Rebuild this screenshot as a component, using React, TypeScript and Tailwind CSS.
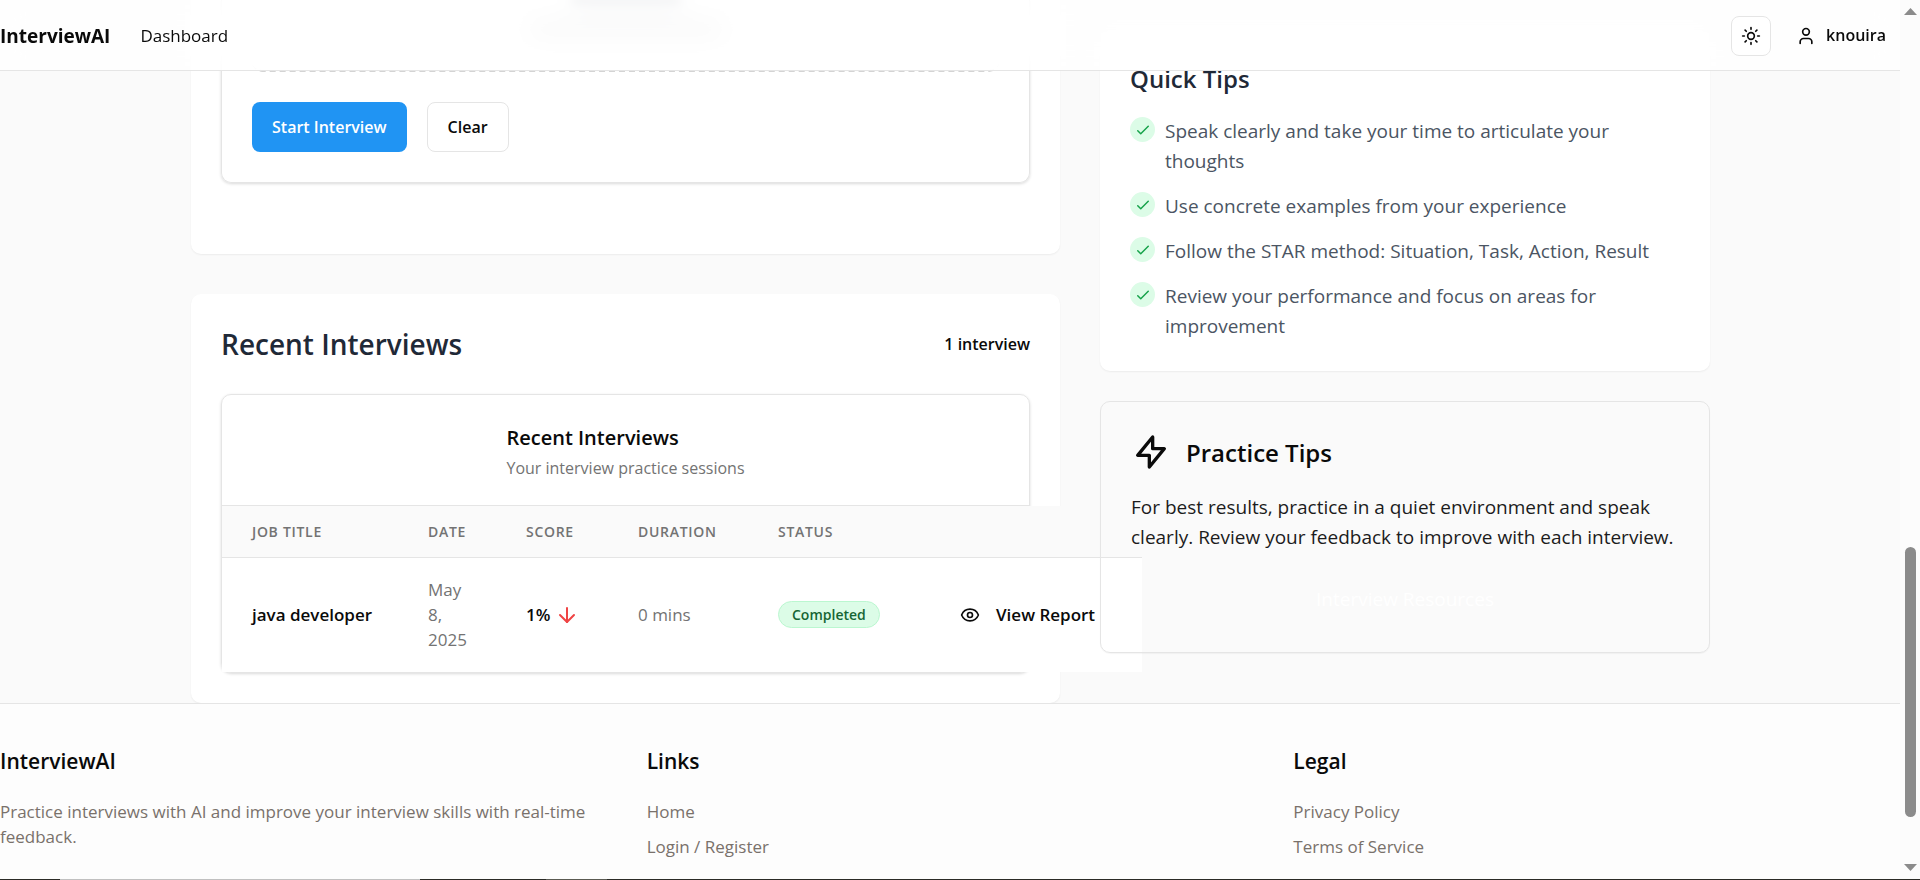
import React from "react";
import { ArrowDown, Eye, Sun, User } from "lucide-react";

const tips = [
  "Speak clearly and take your time to articulate your thoughts",
  "Use concrete examples from your experience",
  "Follow the STAR method: Situation, Task, Action, Result",
  "Review your performance and focus on areas for improvement",
];

const footerColumns = [
  { title: "Links", links: ["Home", "Login / Register"] },
  { title: "Legal", links: ["Privacy Policy", "Terms of Service"] },
];

function Header() {
  return (
    <header className="absolute inset-x-0 top-0 z-20 flex h-[71px] items-center justify-between border-b border-[#e5e5e5] bg-white/80 pr-[14px] pt-px backdrop-blur-md">
      <nav className="flex items-center gap-[30px]">
        <a href="#home" className="text-[19px] font-bold leading-[30px] text-[#0a0a0a]">
          InterviewAI
        </a>
        <a href="#dashboard" className="text-[17px] font-medium leading-[25px] text-[#0a0a0a]">
          Dashboard
        </a>
      </nav>
      <div className="flex items-center gap-[25px]">
        <button
          type="button"
          aria-label="Toggle theme"
          className="flex size-10 items-center justify-center rounded-lg border border-[#e5e5e5] bg-white text-[#0a0a0a]"
        >
          <Sun size={20} strokeWidth={2} />
        </button>
        <button type="button" className="flex items-center gap-[10px] text-[16px] font-semibold leading-[25px] text-[#0a0a0a]">
          <User size={20} strokeWidth={2} />
          knouira
        </button>
      </div>
    </header>
  );
}

function StartCard() {
  return (
    <section className="rounded-b-[10px] bg-white px-[30px] pb-[71px] shadow-[0_1px_2px_rgba(0,0,0,0.06)]">
      <div className="rounded-b-[10px] border-x border-b border-[#e5e5e5] px-[30px] pb-[30px] shadow-[0_1px_3px_rgba(0,0,0,0.15)]">
        <div className="flex h-[72px] flex-col items-center gap-[18px] rounded-b-[10px] border-b-2 border-dashed border-[#d4d4d4]" aria-hidden="true">
          <div className="h-[5px] w-[110px] rounded-full bg-[#6b7280] blur-[5px]" />
          <div className="h-[12px] w-[196px] rounded-full bg-[#d4d4d4] blur-[3px]" />
        </div>
        <div className="mt-[30px] flex gap-5">
          <button type="button" className="h-[50px] rounded-lg bg-[#2094f3] px-5 text-[16px] font-semibold text-white">
            Start Interview
          </button>
          <button type="button" className="h-[50px] rounded-lg border border-[#e5e5e5] bg-white px-5 text-[16px] font-semibold text-[#0a0a0a]">
            Clear
          </button>
        </div>
      </div>
    </section>
  );
}

function RecentInterviews() {
  return (
    <section className="rounded-[10px] bg-white p-[30px] shadow-[0_1px_2px_rgba(0,0,0,0.06)]">
      <div className="mb-[30px] flex h-10 items-center justify-between">
        <h2 className="text-[28px] font-semibold leading-10 text-[#1f2937]">Recent Interviews</h2>
        <span className="text-[16px] font-semibold leading-[25px] text-[#0a0a0a]">1 interview</span>
      </div>
      <div className="rounded-[10px] border border-[#e5e5e5] shadow-[0_1px_3px_rgba(0,0,0,0.15)]">
        <div className="flex justify-center border-b border-[#e5e5e5] px-[30px] pb-[24px] pt-[26px]">
          <div>
            <h3 className="text-[20px] font-semibold leading-[34px] text-[#0a0a0a]">Recent Interviews</h3>
            <p className="text-[16px] leading-[26px] text-[#737373]">Your interview practice sessions</p>
          </div>
        </div>
        <table className="w-[920px] table-fixed border-collapse text-left">
          <colgroup>
            <col className="w-[176px]" />
            <col className="w-[98px]" />
            <col className="w-[112px]" />
            <col className="w-[140px]" />
            <col className="w-[162px]" />
            <col className="w-[232px]" />
          </colgroup>
          <thead>
            <tr className="h-[51px] border-b border-[#e5e5e5] bg-[#fafafa] text-[14px] uppercase tracking-wider text-[#737373]">
              <th className="pl-[30px] font-semibold">Job Title</th>
              <th className="pl-[30px] font-semibold">Date</th>
              <th className="pl-[30px] font-semibold">Score</th>
              <th className="pl-[30px] font-semibold">Duration</th>
              <th className="pl-[30px] font-semibold">Status</th>
              <th aria-label="Actions" />
            </tr>
          </thead>
          <tbody>
            <tr className="h-[115px] bg-white text-[17px] leading-[25px] text-[#737373]">
              <td className="whitespace-nowrap pl-[30px] font-semibold text-[#0a0a0a]">java developer</td>
              <td className="px-[30px]">May 8, 2025</td>
              <td className="pl-[30px] font-semibold text-[#0a0a0a]">
                <span className="flex items-center gap-[5px]">
                  1%
                  <ArrowDown size={24} strokeWidth={2} className="text-[#ef4444]" />
                </span>
              </td>
              <td className="pl-[30px]">0 mins</td>
              <td className="pl-[30px]">
                <span className="inline-flex h-[27px] items-center rounded-full border border-[#bbf7d0] bg-[#dcfce7] px-[13px] text-[14px] font-semibold text-[#166534]">
                  Completed
                </span>
              </td>
              <td className="pl-[50px]">
                <button type="button" className="flex items-center gap-4 font-semibold text-[#0a0a0a]">
                  <Eye size={20} strokeWidth={2} />
                  View Report
                </button>
              </td>
            </tr>
          </tbody>
        </table>
      </div>
    </section>
  );
}

function QuickTips() {
  return (
    <section className="mt-[31px] rounded-[10px] bg-white p-[30px] shadow-[0_1px_2px_rgba(0,0,0,0.06)]">
      <h2 className="mb-5 text-[24px] font-semibold leading-[35px] text-[#1f2937]">Quick Tips</h2>
      <ul className="flex flex-col gap-[15px]">
        {tips.map((tip) => (
          <li key={tip} className="flex items-start gap-[10px]">
            <span className="mt-px flex size-[25px] shrink-0 items-center justify-center rounded-full bg-[#dcfce7] text-[#16a34a]">
              <svg className="size-[18px]" fill="none" viewBox="0 0 24 24" stroke="currentColor" strokeWidth={2} strokeLinecap="round" strokeLinejoin="round">
                <path d="M5 13l4 4L19 7" />
              </svg>
            </span>
            <span className="text-[19px] leading-[30px] text-[#4b5563]">{tip}</span>
          </li>
        ))}
      </ul>
    </section>
  );
}

function PracticeTips() {
  return (
    <section className="relative rounded-[10px] border border-[#e5e5e5] p-[30px] shadow-[0_1px_1px_rgba(0,0,0,0.04)]">
      <div className="mb-5 flex items-center gap-[15px]">
        <svg className="size-10 text-[#0a0a0a]" fill="none" viewBox="0 0 24 24" stroke="currentColor" strokeWidth={2} strokeLinecap="round" strokeLinejoin="round">
          <path d="M13 10V3L4 14h7v7l9-11h-7z" />
        </svg>
        <h2 className="text-[24px] font-semibold leading-[35px] text-[#0a0a0a]">Practice Tips</h2>
      </div>
      <p className="mb-[24px] text-[19px] leading-[30px] text-[#1c1c1c]">
        For best results, practice in a quiet environment and speak clearly. Review your feedback to improve with each interview.
      </p>
      <button type="button" className="h-[46px] w-full text-[19px] font-medium text-white">
        Interview Resources
      </button>
    </section>
  );
}

function Footer() {
  return (
    <footer className="grid grow grid-cols-3 gap-10 border-t border-[#e5e5e5] bg-[#fdfdfd] pt-10">
      <div>
        <h3 className="mb-5 text-[21px] font-semibold leading-[35px] text-[#0a0a0a]">InterviewAI</h3>
        <p className="text-[17px] leading-[25px] text-[#79716b]">
          Practice interviews with AI and improve your interview skills with real-time feedback.
        </p>
      </div>
      {footerColumns.map((column) => (
        <div key={column.title}>
          <h3 className="mb-5 text-[21px] font-semibold leading-[35px] text-[#0a0a0a]">{column.title}</h3>
          <ul className="flex flex-col gap-[10px]">
            {column.links.map((link) => (
              <li key={link} className="text-[17px] leading-[25px] text-[#79716b]">
                <a href="#footer">{link}</a>
              </li>
            ))}
          </ul>
        </div>
      ))}
    </footer>
  );
}

function Scrollbar() {
  return (
    <div className="flex w-5 shrink-0 flex-col items-center bg-[#fcfcfc] pb-2 pt-2 text-[#8b8b8b]" aria-hidden="true">
      <svg className="h-[7px] w-[13px]" viewBox="0 0 13 7" fill="currentColor">
        <path d="M6.5 0L13 7H0z" />
      </svg>
      <div className="grow-[532]" />
      <div className="w-[11px] grow-[270] rounded-full bg-[#8b8b8b]" />
      <div className="grow-[47]" />
      <svg className="h-[7px] w-[13px]" viewBox="0 0 13 7" fill="currentColor">
        <path d="M0 0h13L6.5 7z" />
      </svg>
    </div>
  );
}

export default function App() {
  return (
    <div className="flex h-screen flex-col overflow-hidden bg-[#fafafa] font-['Open_Sans',sans-serif]">
      <div className="flex min-h-0 grow">
        <div className="relative flex min-w-0 grow flex-col">
          <Header />
          <main className="mx-auto grid w-full max-w-[1600px] grid-cols-[minmax(0,869fr)_minmax(0,610fr)] gap-10 pl-[41px] pr-10">
            <div className="flex flex-col gap-10">
              <StartCard />
              <RecentInterviews />
            </div>
            <div className="flex flex-col gap-[30px]">
              <QuickTips />
              <PracticeTips />
            </div>
          </main>
          <Footer />
        </div>
        <Scrollbar />
      </div>
      <div className="flex h-px shrink-0 bg-[#2b2b26]" aria-hidden="true">
        <div className="ml-[60px] w-[360px] bg-[#c0c0c0]" />
        <div className="ml-[126px] w-[61px] bg-[#5a5a52]" />
      </div>
    </div>
  );
}
